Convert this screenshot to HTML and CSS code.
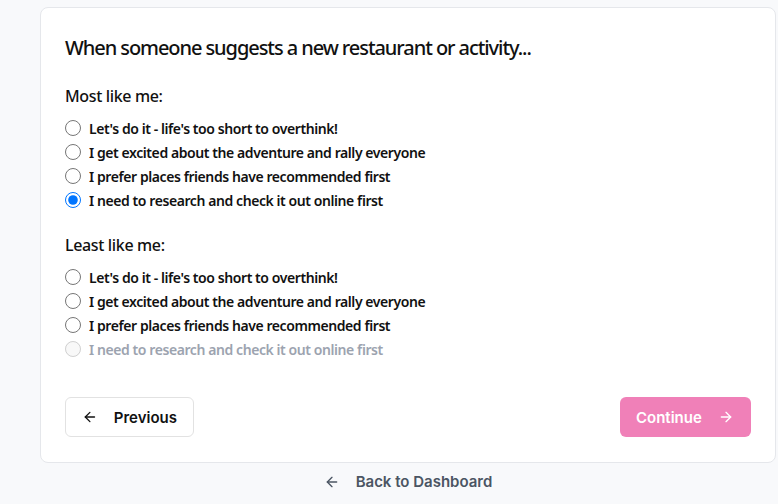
FILE: index.html
```html
<!DOCTYPE html>
<html>
<head>
<meta charset="utf-8">
<link rel="stylesheet" href="styles.css">
</head>
<body>
<div class="page">
  <div class="card">
    <h2 class="question">When someone suggests a new restaurant or activity...</h2>
    <div class="group">
      <h3 class="group-title">Most like me:</h3>
      <label class="option"><input type="radio" name="most"><span>Let's do it - life's too short to overthink!</span></label>
      <label class="option"><input type="radio" name="most"><span>I get excited about the adventure and rally everyone</span></label>
      <label class="option"><input type="radio" name="most"><span>I prefer places friends have recommended first</span></label>
      <label class="option"><input type="radio" name="most" checked><span>I need to research and check it out online first</span></label>
    </div>
    <div class="group">
      <h3 class="group-title">Least like me:</h3>
      <label class="option"><input type="radio" name="least"><span>Let's do it - life's too short to overthink!</span></label>
      <label class="option"><input type="radio" name="least"><span>I get excited about the adventure and rally everyone</span></label>
      <label class="option"><input type="radio" name="least"><span>I prefer places friends have recommended first</span></label>
      <label class="option disabled"><input type="radio" name="least" disabled><span>I need to research and check it out online first</span></label>
    </div>
    <div class="actions">
      <button class="btn btn-prev">
        <svg width="16" height="16" viewBox="0 0 24 24" fill="none" stroke="currentColor" stroke-width="2" stroke-linecap="round" stroke-linejoin="round"><path d="M19 12H5"/><path d="M12 19l-7-7 7-7"/></svg>
        <span>Previous</span>
      </button>
      <button class="btn btn-next">
        <span>Continue</span>
        <svg width="16" height="16" viewBox="0 0 24 24" fill="none" stroke="currentColor" stroke-width="2" stroke-linecap="round" stroke-linejoin="round"><path d="M5 12h14"/><path d="M12 5l7 7-7 7"/></svg>
      </button>
    </div>
  </div>
  <a class="back" href="#">
    <svg width="16" height="16" viewBox="0 0 24 24" fill="none" stroke="currentColor" stroke-width="2" stroke-linecap="round" stroke-linejoin="round"><path d="M19 12H5"/><path d="M12 19l-7-7 7-7"/></svg>
    <span>Back to Dashboard</span>
  </a>
</div>
</body>
</html>
```
FILE: styles.css
```css
html, body {
  margin: 0;
  padding: 0;
  background: #f8f9fb;
  font-family: "Noto Sans", "Open Sans", sans-serif;
  color: #111;
}
.page {
  padding: 7px 0 0 40px;
  width: 736px;
}
.card {
  background: #fff;
  border: 1px solid #e5e7eb;
  border-radius: 8px;
  padding: 24px;
  box-sizing: border-box;
  height: 456px;
}
.question {
  margin: 2px 0 22px;
  font-size: 20px;
  font-weight: 500;
  line-height: 28px;
  letter-spacing: -1.07px;
}
.group {
  margin-bottom: 21px;
}
.group-title {
  margin: 0 0 8px;
  font-size: 16px;
  font-weight: 500;
  line-height: 24px;
  letter-spacing: -0.35px;
}
.option {
  display: flex;
  align-items: center;
  gap: 8px;
  height: 24px;
  font-size: 14px;
  font-weight: 600;
  letter-spacing: -0.42px;
}
.option input {
  margin: 0;
  width: 16px;
  height: 16px;
}
.option.disabled {
  color: #9ca3af;
}
.actions {
  display: flex;
  justify-content: space-between;
  margin-top: 36px;
}
.btn {
  display: flex;
  align-items: center;
  height: 40px;
  border-radius: 6px;
  font-family: "Inter", sans-serif;
  font-size: 15px;
  font-weight: 600;
  padding: 0 16px;
}
.btn-prev {
  background: #fff;
  border: 1px solid #e2e2e2;
  color: #111;
  gap: 16px;
  width: 129px;
}
.btn-next {
  background: #f080b8;
  border: none;
  color: #fff;
  gap: 16px;
  width: 131px;
}
.back {
  display: flex;
  align-items: center;
  justify-content: center;
  gap: 16px;
  margin-top: 9px;
  color: #4b5563;
  text-decoration: none;
  font-family: "Inter", sans-serif;
  font-size: 15px;
  font-weight: 600;
  width: 736px;
}
```
